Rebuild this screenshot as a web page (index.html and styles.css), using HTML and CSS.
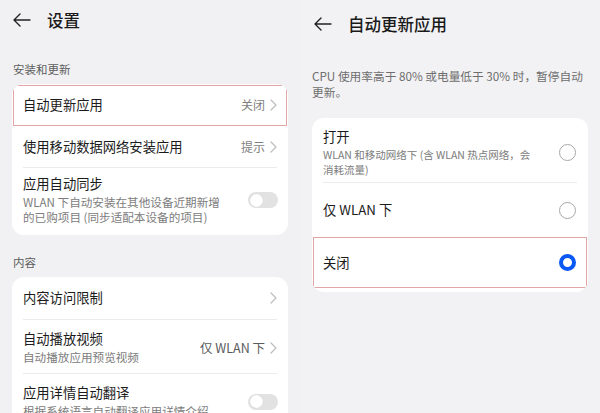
FILE: index.html
```html
<!DOCTYPE html>
<html lang="zh-CN">
<head>
<meta charset="utf-8">
<title>设置</title>
<link rel="stylesheet" href="styles.css">
</head>
<body>
<div class="screen">
  <section class="panel left">
    <header class="bar">
      <svg class="back" viewBox="0 0 18 14" width="18" height="14"><path d="M7 1 L1 7 L7 13 M1 7 H17" fill="none" stroke="#222" stroke-width="1.4" stroke-linecap="round" stroke-linejoin="round"/></svg>
      <h1 class="bar-title">设置</h1>
    </header>

    <div class="group-label g1">安装和更新</div>
    <div class="card">
      <div class="row r42 marked">
        <span class="title">自动更新应用</span>
        <span class="value">关闭<svg class="chev" viewBox="0 0 7 12" width="7" height="12"><path d="M1 1 L6 6 L1 11" fill="none" stroke="#bdbdbd" stroke-width="1.2" stroke-linecap="round" stroke-linejoin="round"/></svg></span>
      </div>
      <div class="row r41">
        <span class="title">使用移动数据网络安装应用</span>
        <span class="value">提示<svg class="chev" viewBox="0 0 7 12" width="7" height="12"><path d="M1 1 L6 6 L1 11" fill="none" stroke="#bdbdbd" stroke-width="1.2" stroke-linecap="round" stroke-linejoin="round"/></svg></span>
      </div>
      <div class="divider"></div>
      <div class="row multi p7">
        <div class="texts">
          <div class="title">应用自动同步</div>
          <div class="sub">WLAN 下自动安装在其他设备近期新增<br>的已购项目 (同步适配本设备的项目)</div>
        </div>
        <span class="toggle"><span class="knob"></span></span>
      </div>
    </div>

    <div class="group-label g2">内容</div>
    <div class="card">
      <div class="row r42">
        <span class="title">内容访问限制</span>
        <span class="value"><svg class="chev" viewBox="0 0 7 12" width="7" height="12"><path d="M1 1 L6 6 L1 11" fill="none" stroke="#bdbdbd" stroke-width="1.2" stroke-linecap="round" stroke-linejoin="round"/></svg></span>
      </div>
      <div class="divider"></div>
      <div class="row multi p10">
        <div class="texts">
          <div class="title">自动播放视频</div>
          <div class="sub">自动播放应用预览视频</div>
        </div>
        <span class="value dark">仅 WLAN 下<svg class="chev" viewBox="0 0 7 12" width="7" height="12"><path d="M1 1 L6 6 L1 11" fill="none" stroke="#bdbdbd" stroke-width="1.2" stroke-linecap="round" stroke-linejoin="round"/></svg></span>
      </div>
      <div class="divider"></div>
      <div class="row multi p10">
        <div class="texts">
          <div class="title">应用详情自动翻译</div>
          <div class="sub">根据系统语言自动翻译应用详情介绍</div>
        </div>
        <span class="toggle"><span class="knob"></span></span>
      </div>
    </div>
  </section>

  <section class="panel right">
    <header class="bar tall">
      <svg class="back" viewBox="0 0 18 14" width="18" height="14"><path d="M7 1 L1 7 L7 13 M1 7 H17" fill="none" stroke="#222" stroke-width="1.4" stroke-linecap="round" stroke-linejoin="round"/></svg>
      <h1 class="bar-title">自动更新应用</h1>
    </header>

    <p class="desc">CPU 使用率高于 80% 或电量低于 30% 时，暂停自动<br>更新。</p>

    <div class="card choices">
      <div class="choice c1">
        <div class="texts">
          <div class="title">打开</div>
          <div class="sub small">WLAN 和移动网络下 (含 WLAN 热点网络，会<br>消耗流量)</div>
        </div>
        <span class="radio"></span>
      </div>
      <div class="divider"></div>
      <div class="choice c2">
        <span class="title">仅 WLAN 下</span>
        <span class="radio"></span>
      </div>
      <div class="choice c3 marked">
        <span class="title">关闭</span>
        <span class="radio on"></span>
      </div>
    </div>
  </section>
</div>
</body>
</html>
```

FILE: styles.css
```css
* { box-sizing: border-box; }

html, body {
  margin: 0;
  padding: 0;
  width: 600px;
  height: 413px;
  overflow: hidden;
  background: #f1f1f3;
  font-family: "Noto Sans CJK SC", "Noto Sans", sans-serif;
  color: #1b1b1b;
}

.screen {
  display: flex;
  width: 600px;
  height: 413px;
}

.panel {
  width: 300px;
  height: 413px;
  overflow: hidden;
  padding: 0 12px;
}

.panel.right {
  background: #f2f2f4;
}

.bar {
  height: 40px;
  display: flex;
  align-items: center;
  gap: 16px;
  padding-left: 1px;
}

.bar.tall {
  height: 48px;
  padding-left: 2px;
}

.back { display: block; flex: none; }

.bar-title {
  margin: 0;
  font-size: 16.5px;
  font-weight: 500;
  line-height: 20px;
  color: #1a1a1a;
}

.group-label {
  font-size: 11.5px;
  line-height: 16px;
  color: #5e5e5e;
  padding-left: 1px;
  margin-bottom: 7px;
}

.g1 { margin-top: 21px; }
.g2 { margin-top: 19px; }

.card {
  background: #fff;
  border-radius: 12px;
  overflow: hidden;
}

.row {
  position: relative;
  display: flex;
  align-items: center;
  justify-content: space-between;
  padding: 0 11px;
}

.r42 { height: 42px; }
.r41 { height: 41px; }

.row.multi.p7 { padding-top: 7px; padding-bottom: 10px; }
.row.multi.p10 { padding-top: 10px; padding-bottom: 8px; }

.title {
  font-size: 13.3px;
  line-height: 18px;
  color: #1b1b1b;
}

.sub {
  margin-top: 2px;
  font-size: 11.6px;
  line-height: 15px;
  color: #7c7c7c;
}

.sub.small {
  font-size: 10.5px;
  line-height: 14.5px;
}

.value {
  display: flex;
  align-items: center;
  gap: 5px;
  font-size: 12px;
  line-height: 16px;
  color: #7f7f7f;
}

.value.dark {
  font-size: 12.5px;
  color: #5a5a5a;
}

.chev { display: block; }

.divider {
  height: 1px;
  margin: 0 11px;
  background: #ebebeb;
}

.toggle {
  position: relative;
  flex: none;
  width: 30px;
  height: 16px;
  border-radius: 8px;
  background: #e2e2e2;
  margin-right: -1px;
}

.knob {
  position: absolute;
  top: 1.5px;
  left: 1.5px;
  width: 13px;
  height: 13px;
  border-radius: 50%;
  background: #fff;
  box-shadow: 0 0 1px rgba(0,0,0,0.15);
}

.marked::after {
  content: "";
  position: absolute;
  top: 1px;
  left: 1px;
  right: 1px;
  bottom: 0;
  border: 1px solid #e3a6a6;
  pointer-events: none;
}

.desc {
  margin: 19.5px 0 0;
  font-size: 11.7px;
  line-height: 16px;
  color: #6e6e6e;
}

.choices {
  margin-top: 18.5px;
  padding-bottom: 4px;
}

.choice {
  position: relative;
  display: flex;
  align-items: center;
  justify-content: space-between;
  padding: 0 12px 0 11px;
}

.c1 { padding-top: 10px; padding-bottom: 5px; height: 64px; align-items: center; }
.c2 { height: 54px; }
.c3 { height: 51px; }

.c3.marked::after {
  top: 0;
  left: 1px;
  right: 1px;
  bottom: 0;
}

.radio {
  flex: none;
  width: 17px;
  height: 17px;
  border-radius: 50%;
  border: 1.2px solid #a8a8a8;
  background: #fff;
}

.radio.on {
  border: 4.5px solid #0a59f7;
}
```
